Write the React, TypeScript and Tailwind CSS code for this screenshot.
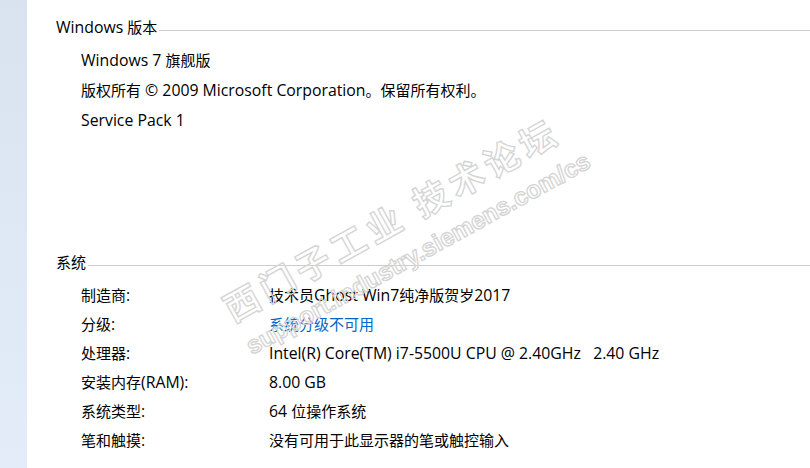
import React from "react";

const sysRows: { label: string; value: string; link?: boolean }[] = [
  { label: "制造商:", value: "技术员Ghost Win7纯净版贺岁2017" },
  { label: "分级:", value: "系统分级不可用", link: true },
  { label: "处理器:", value: "Intel(R) Core(TM) i7-5500U CPU @ 2.40GHz\u00a0\u00a0\u00a02.40 GHz" },
  { label: "安装内存(RAM):", value: "8.00 GB" },
  { label: "系统类型:", value: "64 位操作系统" },
  { label: "笔和触摸:", value: "没有可用于此显示器的笔或触控输入" },
];

// latin runs look a touch bigger than the CJK glyphs in the original UI font
function T({ children }: { children: string }) {
  const parts = children.match(/[\u0000-\u00ff]+|[^\u0000-\u00ff]+/g) || [];
  return (
    <span>
      {parts.map((p, i) =>
        /^[\u0000-\u00ff]/.test(p) ? (
          <span key={i} className="text-[15.8px]">
            {p}
          </span>
        ) : (
          <span key={i}>{p}</span>
        )
      )}
    </span>
  );
}

function SectionHeader({ title }: { title: string }) {
  return (
    <div className="flex items-center h-5">
      <span className="leading-5 whitespace-nowrap">
        <T>{title}</T>
      </span>
      <div className="flex-1 h-px bg-[#cccccc] ml-[2px] mt-[6px]" />
    </div>
  );
}

function Watermark() {
  return (
    <svg className="absolute inset-0 pointer-events-none" width="810" height="468">
      <g transform="translate(233 323) rotate(-29)">
        <text
          x="0"
          y="0"
          fontSize="35"
          fontWeight="700"
          letterSpacing="5.5"
          fill="none"
          stroke="#d4d4d4"
          strokeWidth="1.3"
          style={{ fontFamily: '"Noto Sans CJK SC", sans-serif' }}
        >
          西门子工业 技术论坛
        </text>
      </g>
      <g transform="translate(252 355) rotate(-29)">
        <text
          x="0"
          y="0"
          fontSize="24.5"
          fontWeight="700"
          fill="none"
          stroke="#d4d4d4"
          strokeWidth="1.3"
          style={{ fontFamily: '"Liberation Sans", sans-serif' }}
        >
          support.industry.siemens.com/cs
        </text>
      </g>
    </svg>
  );
}

export default function App() {
  return (
    <div
      className="relative flex w-[810px] h-[468px] overflow-hidden bg-white text-[15px] text-black"
      style={{ fontFamily: '"Open Sans", "Noto Sans CJK SC", sans-serif' }}
    >
      {/* left nav strip */}
      <div className="w-[27px] h-full bg-gradient-to-b from-[#d9e3f0] to-[#e4ecf9]" />

      <main className="flex-1 pl-[29px] pt-[17px]">
        {/* Windows edition */}
        <SectionHeader title="Windows 版本" />
        <div className="pl-[25px] pt-[9px]">
          <div className="h-[30px] flex items-center whitespace-nowrap">
            <T>Windows 7 旗舰版</T>
          </div>
          <div className="h-[30px] flex items-center whitespace-nowrap">
            <T>版权所有 © 2009 Microsoft Corporation。保留所有权利。</T>
          </div>
          <div className="h-[30px] flex items-center whitespace-nowrap">
            <T>Service Pack 1</T>
          </div>
        </div>

        {/* System */}
        <div className="mt-[116px]">
          <SectionHeader title="系统" />
        </div>
        <div className="pl-[25px] pt-[9px]">
          {sysRows.map((r) => (
            <div key={r.label} className="h-[29px] flex items-center whitespace-nowrap">
              <div className="w-[188px]">
                <T>{r.label}</T>
              </div>
              <div className={r.link ? "text-[#0066cc]" : ""}>
                <T>{r.value}</T>
              </div>
            </div>
          ))}
        </div>
      </main>

      <Watermark />
    </div>
  );
}
